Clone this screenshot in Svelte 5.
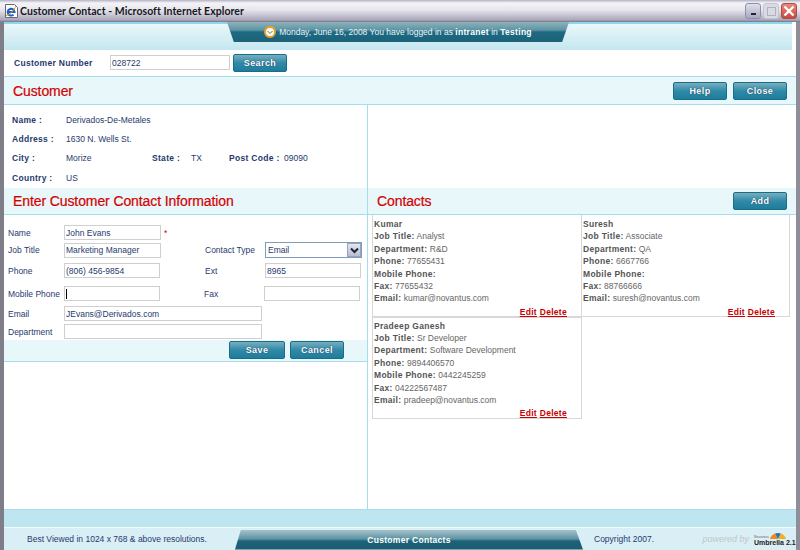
<script>
	const contacts = [
		{ name: 'Kumar', title: 'Analyst', dept: 'R&D', phone: '77655431', mobile: '', fax: '77655432', email: 'kumar@novantus.com' },
		{ name: 'Suresh', title: 'Associate', dept: 'QA', phone: '6667766', mobile: '', fax: '88766666', email: 'suresh@novantus.com' },
		{ name: 'Pradeep Ganesh', title: 'Sr Developer', dept: 'Software Development', phone: '9894406570', mobile: '0442245259', fax: '04222567487', email: 'pradeep@novantus.com' }
	];
</script>

<div class="window">
	<div class="titlebar">
		<svg class="ie" width="15" height="16" viewBox="0 0 15 16">
			<path d="M1.500 1.500h9l3 3v10h-12z" fill="#fff" stroke="#667" />
			<path d="M4 9h6.500a3.400 3.400 0 1 0-1 2.600" fill="none" stroke="#1d5fc4" stroke-width="2" />
			<path d="M2 12.500c3 0 8-5 10-9.500" stroke="#e0a020" fill="none" />
		</svg>
		<span class="title">Customer Contact - Microsoft Internet Explorer</span>
		<div class="controls">
			<span class="ctl min"><i></i></span>
			<span class="ctl max"><i></i></span>
			<span class="ctl close">
				<svg width="12" height="12" viewBox="0 0 12 12"><path d="M1.500 1.500l9 9M10.500 1.500l-9 9" stroke="#fff" stroke-width="2.400" /></svg>
			</span>
		</div>
	</div>

	<div class="frame">
		<div class="top">
			<div class="toptab">
				<svg width="12" height="12" viewBox="0 0 12 12">
					<circle cx="6" cy="6" r="5" fill="#fff" stroke="#f0a020" stroke-width="2" />
					<path d="M3.500 5l2.500 2.500L8.500 5" fill="none" stroke="#8a6a20" />
				</svg>
				<span>Monday, June 16, 2008 You have logged in as <b>intranet</b> in <b>Testing</b></span>
			</div>
		</div>

		<div class="search">
			<label for="num">Customer Number</label>
			<input id="num" class="field" value="028722" />
			<button class="btn">Search</button>
		</div>

		<div class="bar customer">
			<h2>Customer</h2>
			<div class="actions">
				<button class="btn">Help</button>
				<button class="btn">Close</button>
			</div>
		</div>

		<div class="columns">
			<div class="left">
				<div class="info">
					<div class="row"><b>Name :</b><span>Derivados-De-Metales</span></div>
					<div class="row"><b>Address :</b><span>1630 N. Wells St.</span></div>
					<div class="row">
						<b>City :</b><span class="city">Morize</span>
						<b class="state">State :</b><span class="st">TX</span>
						<b class="pc">Post Code :</b><span>09090</span>
					</div>
					<div class="row"><b>Country :</b><span>US</span></div>
				</div>

				<div class="bar plain"><h2>Enter Customer Contact Information</h2></div>

				<div class="form">
					<div class="frow r1">
						<span class="lab">Name</span>
						<input class="field f1" value="John Evans" /><em>*</em>
					</div>
					<div class="frow r2">
						<span class="lab">Job Title</span>
						<input class="field f1" value="Marketing Manager" />
						<span class="lab2">Contact Type</span>
						<div class="select"><span>Email</span><i>
							<svg width="9" height="7" viewBox="0 0 9 7"><path d="M1 1.500l3.500 3.500L8 1.500" fill="none" stroke="#223" stroke-width="2" /></svg>
						</i></div>
					</div>
					<div class="frow r3">
						<span class="lab">Phone</span>
						<input class="field f2" value="(806) 456-9854" />
						<span class="lab2 wide">Ext</span>
						<input class="field f3" value="8965" />
					</div>
					<div class="frow r4">
						<span class="lab">Mobile Phone</span>
						<div class="field f2 caret"><i></i></div>
						<span class="lab2">Fax</span>
						<input class="field f3" />
					</div>
					<div class="frow r5">
						<span class="lab">Email</span>
						<input class="field f4" value="JEvans@Derivados.com" />
					</div>
					<div class="frow r6">
						<span class="lab">Department</span>
						<input class="field f4" />
					</div>
				</div>

				<div class="savebar">
					<button class="btn save">Save</button>
					<button class="btn">Cancel</button>
				</div>
			</div>

			<div class="right">
				<div class="empty"></div>
				<div class="bar plain contacts">
					<h2>Contacts</h2>
					<button class="btn">Add</button>
				</div>
				<div class="cards">
					{#each contacts as c}
						<div class="card">
							<b class="name">{c.name}</b>
							<p><b>Job Title:</b> {c.title}</p>
							<p><b>Department:</b> {c.dept}</p>
							<p><b>Phone:</b> {c.phone}</p>
							<p><b>Mobile Phone:</b> {c.mobile}</p>
							<p><b>Fax:</b> {c.fax}</p>
							<p><b>Email:</b> {c.email}</p>
							<div class="links"><u>Edit</u> <u>Delete</u></div>
						</div>
					{/each}
				</div>
			</div>
		</div>

		<div class="band"></div>
		<div class="footer">
			<span class="best">Best Viewed in 1024 x 768 &amp; above resolutions.</span>
			<div class="foottab">Customer Contacts</div>
			<span class="copy">Copyright 2007.</span>
			<span class="powered">powered by</span>
			<div class="umbrella">
				<div class="mark">
					<span>Novantus</span>
					<svg width="16" height="7" viewBox="0 0 16 7">
						<path d="M0 7a8 8 0 0 1 5-5.500L8 7z" fill="#f08a10" />
						<path d="M5 1.500a8 8 0 0 1 6 0L8 7z" fill="#2a6fc0" />
						<path d="M11 1.500a8 8 0 0 1 5 5.500H8z" fill="#f0b020" />
					</svg>
				</div>
				<span>Umbrella 2.1</span>
			</div>
		</div>
	</div>
</div>

<style>
	:global(body) {
		margin: 0;
		background: #fff;
	}

	.window {
		width: 800px;
		height: 550px;
		display: flex;
		flex-direction: column;
		font-family: "Liberation Sans", sans-serif;
		font-size: 8.500px;
		color: #1f3a6e;
		overflow: hidden;
	}

	.window b {
		letter-spacing: 0.3px;
	}

	.titlebar {
		height: 22px;
		flex: none;
		box-sizing: border-box;
		padding: 0 3px 0 4px;
		display: flex;
		align-items: center;
		background: linear-gradient(#b5b3c4 0, #f4f4f8 3px, #e6e5ec 10px, #a9a7ba 20px, #77757f 22px);
	}

	.title {
		margin-left: 1px;
		font-family: Lato, sans-serif;
		font-size: 10.500px;
		font-weight: bold;
		color: #16161c;
		letter-spacing: 0.05px;
	}

	.controls {
		margin-left: auto;
		display: flex;
		gap: 2px;
	}

	.ctl {
		width: 16px;
		height: 16px;
		box-sizing: border-box;
		border-radius: 3px;
		display: flex;
		align-items: center;
		justify-content: center;
		border: 1px solid #8d8fb0;
		background: linear-gradient(#dfe0ea, #a8aac4);
	}

	.min i {
		width: 5px;
		height: 2px;
		margin-top: 6px;
		background: #223;
	}

	.max {
		border-color: #c5c6d0;
		background: #d9dae2;
	}

	.max i {
		width: 7px;
		height: 7px;
		border: 1px solid #b0b1bf;
	}

	.close {
		border-color: #a5504c;
		background: linear-gradient(#e88a78, #c9483c);
	}

	.frame {
		flex: 1;
		min-height: 0;
		display: flex;
		flex-direction: column;
		border-left: 4px solid #7f7e88;
		border-right: 4px solid #8f8e98;
		background: #fff;
	}

	.top {
		height: 28px;
		flex: none;
		box-sizing: border-box;
		margin-right: 4px;
		border-top: 2px solid #8fd6ec;
		background: linear-gradient(#eaf7fa, #c4e7f0);
		display: flex;
		justify-content: center;
	}

	.toptab {
		margin: -2px 0 0 0;
		width: 342px;
		height: 20px;
		display: flex;
		align-items: center;
		justify-content: center;
		gap: 3px;
		color: #e8f2f5;
		background: linear-gradient(#8fb2bb 0, #5d94a4 8px, #1d6a82 10px, #1c6279);
		clip-path: polygon(0 0, 100% 0, 98% 100%, 2% 100%);
	}

	.toptab b {
		color: #fff;
	}

	.search {
		height: 26px;
		flex: none;
		box-sizing: border-box;
		display: flex;
		align-items: center;
		padding: 0 0 1px 10px;
	}

	.search label {
		width: 96px;
		font-weight: bold;
		letter-spacing: 0.3px;
	}

	.field {
		box-sizing: border-box;
		height: 15px;
		padding: 0 1px;
		border: 1px solid #cfcfcf;
		font: inherit;
		color: #1f3a6e;
		background: #fff;
		outline: none;
	}

	.search .field {
		width: 120px;
		margin-right: 3px;
	}

	.btn {
		width: 54px;
		height: 18px;
		padding: 0;
		border: 1px solid #1a6d88;
		border-radius: 2px;
		font: inherit;
		font-size: 9px;
		font-weight: bold;
		letter-spacing: 0.4px;
		color: #fff;
		background: linear-gradient(#78aebf, #2f8aa8 50%, #1f7c9b);
		text-shadow: 0 0 1px #124;
	}

	.bar {
		height: 27px;
		flex: none;
		box-sizing: border-box;
		display: flex;
		align-items: center;
		justify-content: space-between;
		padding: 0 9px;
		background: #e8f7fa;
	}

	.customer {
		height: 29px;
		border-top: 1px solid #a5dcee;
		border-bottom: 1px solid #a5dcee;
	}

	.customer .actions {
		display: flex;
		gap: 6px;
	}

	h2 {
		margin: 0;
		font-size: 14px;
		font-weight: normal;
		letter-spacing: -0.1px;
		color: #d40000;
		-webkit-text-stroke: 0.2px #d40000;
	}

	.columns {
		flex: 1;
		min-height: 0;
		display: grid;
		grid-template-columns: 364px 1fr;
	}

	.left {
		border-right: 1px solid #a5dcee;
	}

	.info {
		height: 83px;
		box-sizing: border-box;
		padding: 5px 8px 0;
		display: flex;
		flex-direction: column;
	}

	.row {
		height: 19.400px;
		display: flex;
		align-items: center;
	}

	.row b {
		width: 54px;
		flex: none;
	}

	.row .city {
		width: 86px;
	}

	.row .state {
		width: 39px;
	}

	.row .st {
		width: 38px;
	}

	.row .pc {
		width: 55px;
	}

	.plain {
		border-bottom: 1px solid #a5dcee;
		height: 27px;
	}

	.form {
		height: 125px;
		box-sizing: border-box;
		padding-top: 10px;
	}

	.frow {
		display: flex;
		align-items: center;
		height: 15px;
		padding-left: 4px;
		white-space: nowrap;
	}

	.r2 { margin-top: 2px; height: 16px; }
	.r3 { margin-top: 5px; }
	.r4 { margin-top: 8px; }
	.r5 { margin-top: 5px; }
	.r6 { margin-top: 3px; }

	.lab {
		width: 56px;
		flex: none;
	}

	.lab2 {
		margin-left: 44px;
		width: 60px;
		flex: none;
	}

	.wide {
		margin-left: 45px;
	}

	.f1 {
		width: 97px;
	}

	.f2,
	.f3 {
		width: 96px;
	}

	.f4 {
		width: 198px;
	}

	em {
		margin-left: 3px;
		color: #d40000;
		font-style: normal;
	}

	.caret {
		display: flex;
		align-items: center;
		padding-left: 1px;
	}

	.caret i {
		width: 1px;
		height: 10px;
		background: #000;
	}

	.select {
		width: 97px;
		height: 16px;
		box-sizing: border-box;
		border: 1px solid #7f9db9;
		display: flex;
		align-items: center;
		justify-content: space-between;
		padding-left: 2px;
	}

	.select i {
		width: 14px;
		height: 14px;
		display: flex;
		align-items: center;
		justify-content: center;
		background: linear-gradient(#e5e6f0, #b9bdd4);
		border: 1px solid #9aa0bd;
		box-sizing: border-box;
	}

	.savebar {
		height: 22px;
		box-sizing: border-box;
		background: #e8f7fa;
		border-bottom: 1px solid #a5dcee;
		display: flex;
		justify-content: flex-end;
		align-items: flex-start;
		gap: 5px;
		padding: 1px 23px 0 0;
	}

	.save {
		width: 56px;
	}

	.empty {
		height: 83px;
	}

	.cards {
		display: grid;
		grid-template-columns: 210px 208px;
		margin-left: 4px;
		color: #666;
		width: 418px;
	}

	.card {
		height: 102px;
		box-sizing: border-box;
		padding: 3px 1px 0 1px;
		border: 1px solid #d8d8d8;
		border-top: none;
		display: flex;
		flex-direction: column;
		line-height: 12.400px;
	}

	.card:nth-child(2) {
		border-left: none;
	}

	.card:nth-child(3) {
		border-top: 1px solid #d8d8d8;
		width: 210px;
		padding-top: 1.500px;
	}

	.card p {
		margin: 0;
	}

	.card b {
		color: #555;
	}

	.links {
		margin-top: 1px;
		padding-right: 13px;
		text-align: right;
		color: #c80000;
		font-weight: bold;
		letter-spacing: 0.3px;
	}

	.band {
		height: 17px;
		flex: none;
		border-top: 1px solid #a5dcee;
		background: #bde6f1;
	}

	.footer {
		height: 23px;
		flex: none;
		box-sizing: border-box;
		border-top: 1px solid #f2fbfd;
		background: #daeff5;
		display: flex;
		align-items: center;
	}

	.best {
		margin-left: 23px;
		width: 208px;
		flex: none;
	}

	.foottab {
		width: 348px;
		height: 20px;
		flex: none;
		margin-top: 1px;
		display: flex;
		align-items: center;
		justify-content: center;
		font-weight: bold;
		letter-spacing: 0.3px;
		color: #fff;
		background: linear-gradient(#a7c2c9, #5b93a4 45%, #1d6278 55%, #1b5d72);
		clip-path: polygon(1.700% 0, 97.900% 0, 100% 100%, 0 100%);
	}

	.copy {
		margin-left: 11px;
	}

	.powered {
		margin-left: auto;
		margin-right: 5px;
		font-size: 9px;
		font-style: italic;
		color: #c4c4c4;
	}

	.umbrella {
		width: 42px;
		display: flex;
		flex-direction: column;
		font-size: 7px;
		font-weight: bold;
		color: #222;
		line-height: 7px;
		white-space: nowrap;
		margin-top: -1px;
	}

	.mark {
		display: flex;
		align-items: flex-end;
		gap: 1px;
	}

	.mark span {
		font-size: 3.500px;
		line-height: 4px;
		font-weight: normal;
		color: #666;
	}
</style>
